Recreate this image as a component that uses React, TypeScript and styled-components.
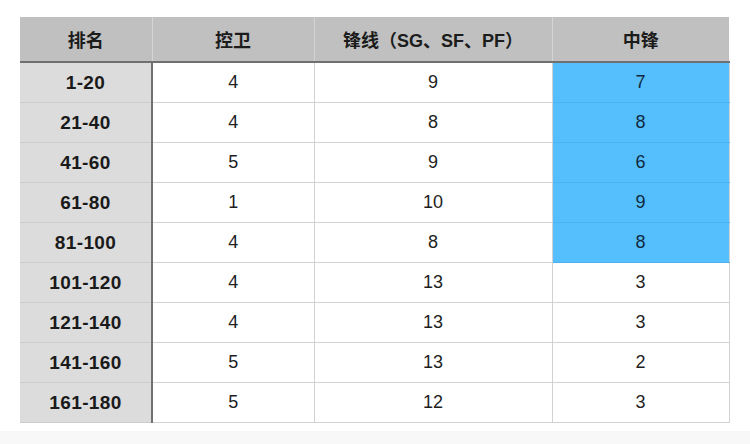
import styled, { createGlobalStyle } from 'styled-components';

const GlobalStyle = createGlobalStyle`
  html, body {
    margin: 0;
    padding: 0;
    background: #ffffff;
  }
  body {
    font-family: "Liberation Sans", "Noto Sans CJK SC", sans-serif;
    color: #1a1a1a;
  }
`;

type Row = {
  rank: string;
  guard: number;
  forward: number;
  center: number;
  highlight?: boolean;
};

const rows: Row[] = [
  { rank: '1-20', guard: 4, forward: 9, center: 7, highlight: true },
  { rank: '21-40', guard: 4, forward: 8, center: 8, highlight: true },
  { rank: '41-60', guard: 5, forward: 9, center: 6, highlight: true },
  { rank: '61-80', guard: 1, forward: 10, center: 9, highlight: true },
  { rank: '81-100', guard: 4, forward: 8, center: 8, highlight: true },
  { rank: '101-120', guard: 4, forward: 13, center: 3 },
  { rank: '121-140', guard: 4, forward: 13, center: 3 },
  { rank: '141-160', guard: 5, forward: 13, center: 2 },
  { rank: '161-180', guard: 5, forward: 12, center: 3 },
];

const App = () => {
  return (
    <Page>
      <GlobalStyle />
      <TableWrapper>
        <Table>
          <colgroup>
            <col style={{ width: 132 }} />
            <col style={{ width: 162 }} />
            <col style={{ width: 238 }} />
            <col style={{ width: 177 }} />
          </colgroup>
          <thead>
            <tr>
              <HeadCell>排名</HeadCell>
              <HeadCell>控卫</HeadCell>
              <HeadCell>锋线（SG、SF、PF）</HeadCell>
              <HeadCell>中锋</HeadCell>
            </tr>
          </thead>
          <tbody>
            {rows.map(row => (
              <tr key={row.rank}>
                <RankCell>{row.rank}</RankCell>
                <Cell>{row.guard}</Cell>
                <Cell>{row.forward}</Cell>
                <Cell $highlight={row.highlight}>{row.center}</Cell>
              </tr>
            ))}
          </tbody>
        </Table>
      </TableWrapper>
      <BottomStrip />
    </Page>
  );
};

export default App;

const Page = styled.div`
  width: 750px;
  height: 444px;
  display: flex;
  flex-direction: column;
  background: #ffffff;
  overflow: hidden;
`;

const TableWrapper = styled.div`
  padding: 17px 0 0 20px;
  height: 431px;
  box-sizing: border-box;
`;

const Table = styled.table`
  border-collapse: collapse;
  table-layout: fixed;
  width: 709px;
`;

const HeadCell = styled.th`
  height: 44px;
  padding: 0;
  background: #bfc0bf;
  font-size: 18px;
  font-weight: 700;
  color: #1c1c1c;
  text-align: center;
  vertical-align: middle;
  border-left: 1px solid #d4d4d4;
  border-bottom: 2px solid #707070;

  &:first-child {
    border-left: none;
  }
`;

const Cell = styled.td<{ $highlight?: boolean }>`
  box-sizing: border-box;
  height: 40px;
  padding: 1px 0 0;
  font-size: 18px;
  color: ${({ $highlight }) => ($highlight ? '#0f2a40' : '#1e1e1e')};
  text-align: center;
  vertical-align: middle;
  background: ${({ $highlight }) => ($highlight ? '#55befc' : '#ffffff')};
  border: 1px solid #d2d2d2;
  border-top: none;
  border-bottom-color: ${({ $highlight }) => ($highlight ? '#4eb2ee' : '#d2d2d2')};
`;

const RankCell = styled.td`
  box-sizing: border-box;
  height: 40px;
  padding: 1px 0 0;
  font-size: 19px;
  font-weight: 700;
  letter-spacing: 0.4px;
  color: #1a1a1a;
  text-align: center;
  vertical-align: middle;
  background: #dcdcdc;
  border-bottom: 1px solid #cccccc;
  border-right: 2px solid #707070;
`;

const BottomStrip = styled.div`
  flex: 1;
  background: #f8f8f8;
`;
